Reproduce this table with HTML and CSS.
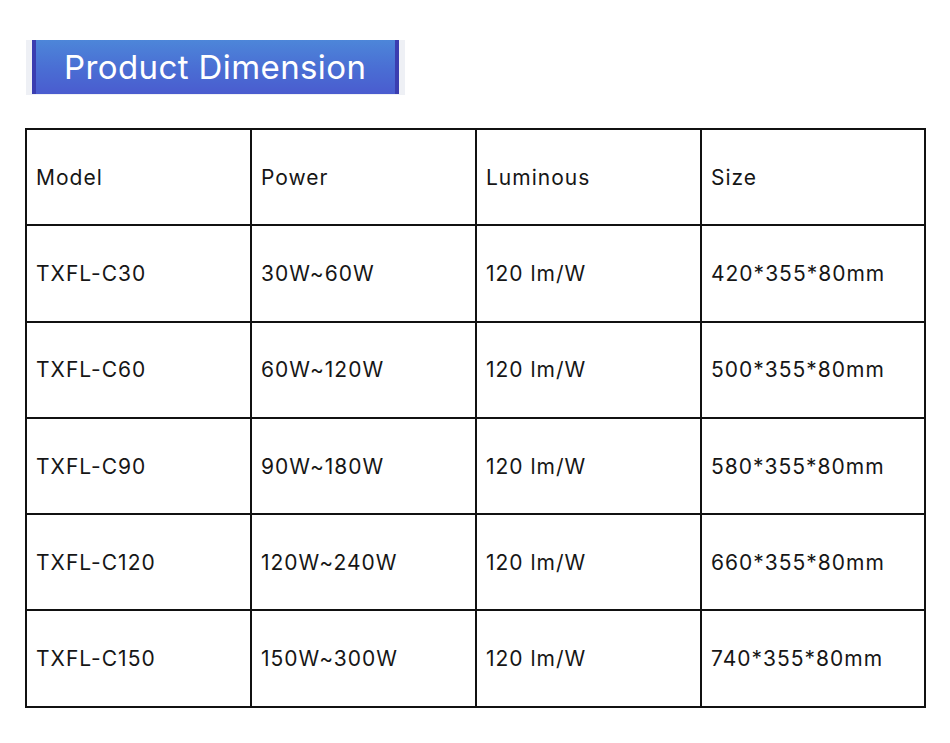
FILE: index.html
```html
<!DOCTYPE html>
<html>
<head>
<meta charset="utf-8">
<link rel="stylesheet" href="styles.css">
</head>
<body>
<div class="page">
  <div class="title-wrap">
    <div class="title">Product Dimension</div>
  </div>
  <div class="spec">
    <div class="cell">Model</div><div class="cell">Power</div><div class="cell">Luminous</div><div class="cell">Size</div>
    <div class="cell">TXFL-C30</div><div class="cell">30W~60W</div><div class="cell">120 lm/W</div><div class="cell">420*355*80mm</div>
    <div class="cell">TXFL-C60</div><div class="cell">60W~120W</div><div class="cell">120 lm/W</div><div class="cell">500*355*80mm</div>
    <div class="cell">TXFL-C90</div><div class="cell">90W~180W</div><div class="cell">120 lm/W</div><div class="cell">580*355*80mm</div>
    <div class="cell">TXFL-C120</div><div class="cell">120W~240W</div><div class="cell">120 lm/W</div><div class="cell">660*355*80mm</div>
    <div class="cell">TXFL-C150</div><div class="cell">150W~300W</div><div class="cell">120 lm/W</div><div class="cell">740*355*80mm</div>
  </div>
</div>
</body>
</html>
```
FILE: styles.css
```css
html, body {
  margin: 0;
  padding: 0;
  background: #ffffff;
}
.page {
  width: 950px;
  height: 743px;
  padding-top: 40px;
  box-sizing: border-box;
  font-family: Inter, "Liberation Sans", Arial, sans-serif;
}
.title-wrap {
  margin-left: 26px;
  width: 379px;
  height: 55px;
  background: #eef0f5;
  display: flex;
  padding: 0 6px;
  box-sizing: border-box;
}
.title {
  flex: 1;
  height: 54px;
  background: linear-gradient(180deg, #4d86d9 0%, #4a6fd4 50%, #4a5ccf 100%);
  border-left: 4px solid #3b3db0;
  border-right: 4px solid #3b3db0;
  color: #ffffff;
  font-size: 33px;
  letter-spacing: 0.4px;
  line-height: 54px;
  padding-left: 28px;
}
.spec {
  margin-top: 33px;
  margin-left: 25px;
  width: 901px;
  display: grid;
  grid-template-columns: 223px 223px 223px 222px;
  grid-template-rows: repeat(6, 94.3px);
  gap: 2px;
  padding: 2px;
  box-sizing: border-box;
  background: #111111;
}
.cell {
  background: #ffffff;
  display: flex;
  align-items: center;
  padding-left: 9px;
  font-size: 21px;
  letter-spacing: 1px;
  color: #161616;
}
```
